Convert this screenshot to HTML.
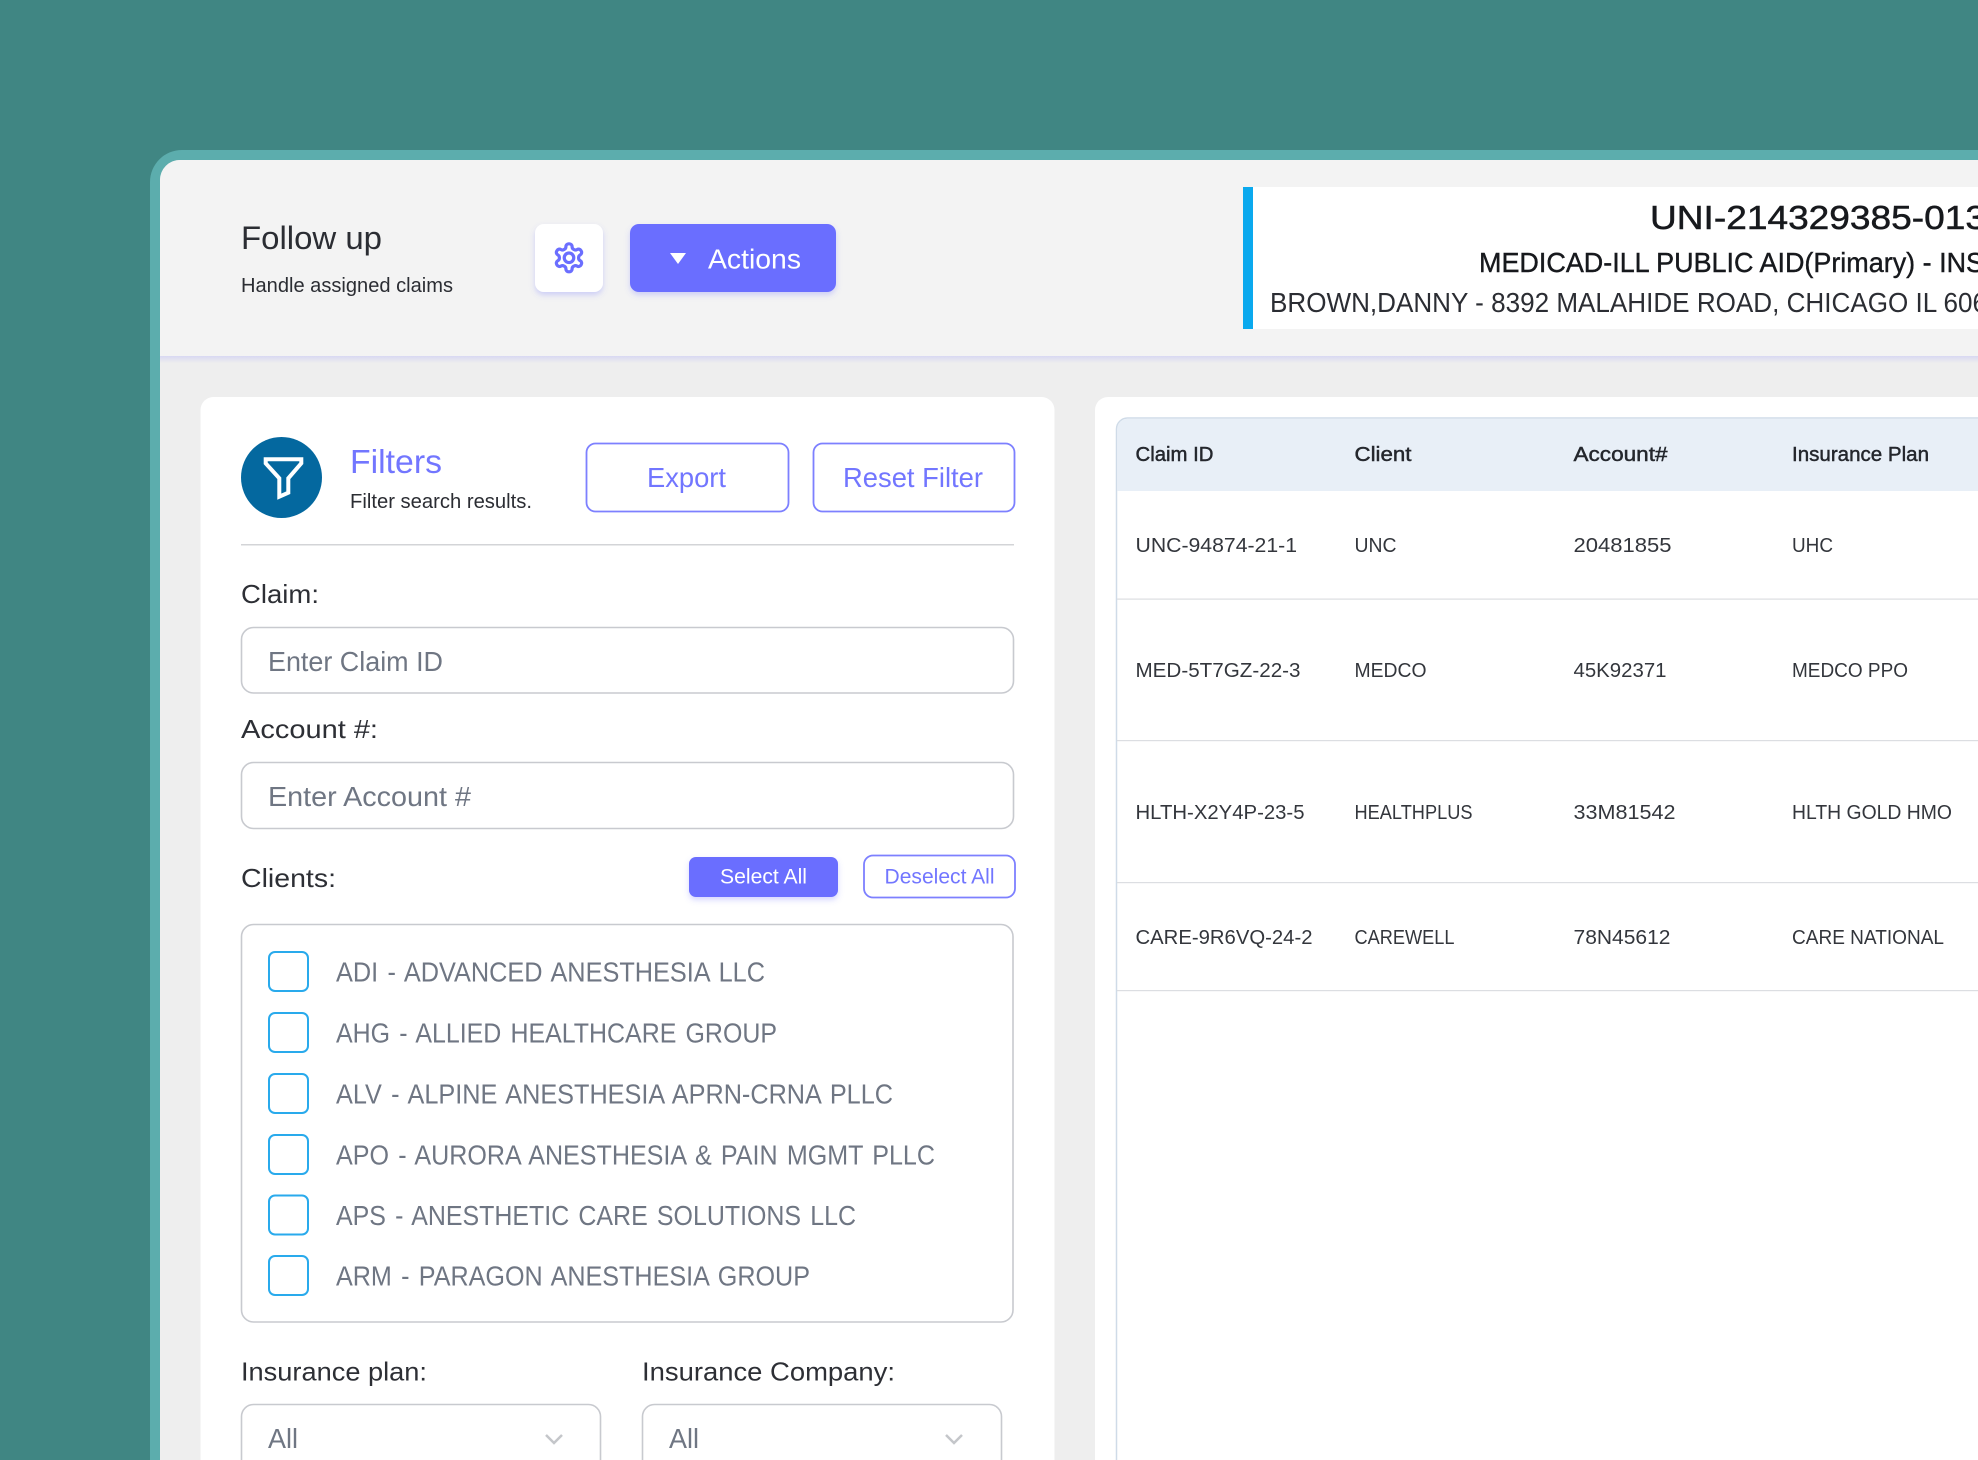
<!DOCTYPE html>
<html lang="en">
<head>
<meta charset="utf-8">
<title>Follow up</title>
<style>
html,body{margin:0;padding:0;width:1978px;height:1460px;overflow:hidden;background:#408683}
svg{display:block;filter:blur(.35px)}
text{font-family:"Liberation Sans",sans-serif;white-space:pre}
.d{fill:#2b2d33}
.g{fill:#6f7683}
.t{fill:#33363c;font-size:20px}
.h{fill:#24272d;font-size:20px;stroke:#24272d;stroke-width:.45px}
.l{fill:#2d2f35;font-size:26px}
.c{fill:#6f7683;font-size:27.5px;word-spacing:2.5px}
.b{fill:#fff;stroke:#29aaec;stroke-width:2px}
.i{fill:#fff;stroke:#c8cacf;stroke-width:1.6px}
.o{fill:#fff;stroke:#7d80ff;stroke-width:1.8px}
.p{fill:#7276ff}
</style>
</head>
<body>
<svg width="1978" height="1460" viewBox="0 0 1978 1460" xmlns="http://www.w3.org/2000/svg">
<defs>
<filter id="s" x="-20%" y="-20%" width="140%" height="150%"><feDropShadow dx="0" dy="3" stdDeviation="3" flood-color="#6b6eff" flood-opacity=".28"/></filter>
<linearGradient id="hl" x1="0" y1="0" x2="0" y2="1"><stop offset="0" stop-color="#d8d8f2"/><stop offset="1" stop-color="#eeeeee"/></linearGradient>
</defs>
<rect width="1978" height="1460" fill="#408683"/>
<path d="M150 1460V182a32 32 0 0 1 32-32H1978V1460Z" fill="#5cadad"/>
<path d="M160 1460V180a20 20 0 0 1 20-20H1978V1460Z" fill="#eeeeee"/>
<path d="M160 356V180a20 20 0 0 1 20-20H1978V356Z" fill="#f3f3f3"/>
<rect x="160" y="356" width="1818" height="7" fill="url(#hl)"/>

<text x="241" y="249" font-size="32" textLength="141" lengthAdjust="spacingAndGlyphs" class="d">Follow up</text>
<text x="241" y="292" font-size="20.5" textLength="212" lengthAdjust="spacingAndGlyphs" class="d">Handle assigned claims</text>

<rect x="535" y="224" width="68" height="68" rx="9" fill="#fff" filter="url(#s)"/>
<g transform="translate(552.200 241) scale(1.4)" fill="none" stroke="#6b6eff" stroke-width="2.300" stroke-linecap="round" stroke-linejoin="round">
<path d="M12.22 2h-.44a2 2 0 0 0-2 2v.18a2 2 0 0 1-1 1.73l-.43.25a2 2 0 0 1-2 0l-.15-.08a2 2 0 0 0-2.73.73l-.22.38a2 2 0 0 0 .73 2.73l.15.1a2 2 0 0 1 1 1.72v.51a2 2 0 0 1-1 1.74l-.15.09a2 2 0 0 0-.73 2.73l.22.38a2 2 0 0 0 2.73.73l.15-.08a2 2 0 0 1 2 0l.43.25a2 2 0 0 1 1 1.73V20a2 2 0 0 0 2 2h.44a2 2 0 0 0 2-2v-.18a2 2 0 0 1 1-1.73l.43-.25a2 2 0 0 1 2 0l.15.08a2 2 0 0 0 2.73-.73l.22-.39a2 2 0 0 0-.73-2.73l-.15-.08a2 2 0 0 1-1-1.74v-.5a2 2 0 0 1 1-1.74l.15-.09a2 2 0 0 0 .73-2.73l-.22-.38a2 2 0 0 0-2.73-.73l-.15.08a2 2 0 0 1-2 0l-.43-.25a2 2 0 0 1-1-1.73V4a2 2 0 0 0-2-2z"/>
<circle cx="12" cy="12" r="3.400"/>
</g>
<rect x="630" y="224" width="206" height="68" rx="9" fill="#6b6eff" filter="url(#s)"/>
<path d="M670 253H686L678 264Z" fill="#fff"/>
<text x="708" y="268.500" font-size="27.5" textLength="93" lengthAdjust="spacingAndGlyphs" fill="#fff">Actions</text>

<rect x="1243" y="187" width="735" height="142" fill="#fff"/>
<rect x="1243" y="187" width="10" height="142" fill="#0aa9ee"/>
<text x="1650" y="229" font-size="33.500" textLength="336" lengthAdjust="spacingAndGlyphs" fill="#17191d" stroke="#17191d" stroke-width=".5">UNI-214329385-013</text>
<text x="1479" y="272" font-size="27.500" textLength="505" lengthAdjust="spacingAndGlyphs" fill="#17191d" stroke="#17191d" stroke-width=".4">MEDICAD-ILL PUBLIC AID(Primary) - INS</text>
<text x="1270" y="312" font-size="27.500" textLength="717" lengthAdjust="spacingAndGlyphs" fill="#2b2d33">BROWN,DANNY - 8392 MALAHIDE ROAD, CHICAGO IL 606</text>

<path d="M200.500 1460V410a13 13 0 0 1 13-13H1041.500a13 13 0 0 1 13 13V1460Z" fill="#fff"/>
<circle cx="281.500" cy="477.500" r="40.500" fill="#04689f"/>
<path d="M265.700 459.300H301.300V463.300L288.300 478.300V492.700L279.300 496.700V478.300L265.700 463.300Z" fill="none" stroke="#fff" stroke-width="4" stroke-linejoin="miter"/>
<text x="350" y="473" font-size="33" textLength="92" lengthAdjust="spacingAndGlyphs" class="p">Filters</text>
<text x="350" y="508" font-size="20.5" textLength="182" lengthAdjust="spacingAndGlyphs" class="d">Filter search results.</text>
<rect x="586.500" y="443.500" width="202" height="68" rx="9" class="o"/>
<text x="647" y="487" font-size="28" textLength="79" lengthAdjust="spacingAndGlyphs" class="p">Export</text>
<rect x="813.500" y="443.500" width="201" height="68" rx="9" class="o"/>
<text x="843" y="487" font-size="28" textLength="140" lengthAdjust="spacingAndGlyphs" class="p">Reset Filter</text>
<rect x="241" y="544" width="773" height="1.500" fill="#d3d4d7"/>

<text x="241" y="603" textLength="78" lengthAdjust="spacingAndGlyphs" class="l">Claim:</text>
<rect x="241.500" y="627.500" width="772" height="65.500" rx="12" class="i"/>
<text x="268" y="671" font-size="27.500" textLength="175" lengthAdjust="spacingAndGlyphs" class="g">Enter Claim ID</text>
<text x="241" y="738" textLength="137" lengthAdjust="spacingAndGlyphs" class="l">Account #:</text>
<rect x="241.500" y="762.500" width="772" height="66" rx="12" class="i"/>
<text x="268" y="806" font-size="27.500" textLength="203" lengthAdjust="spacingAndGlyphs" class="g">Enter Account #</text>

<text x="241" y="887" textLength="95" lengthAdjust="spacingAndGlyphs" class="l">Clients:</text>
<rect x="689" y="857" width="149" height="40" rx="7" fill="#6b6eff" filter="url(#s)"/>
<text x="720" y="883.500" font-size="21" textLength="87" lengthAdjust="spacingAndGlyphs" fill="#fff">Select All</text>
<rect x="864" y="855.500" width="151" height="42" rx="9" class="o"/>
<text x="884.500" y="883.500" font-size="21" textLength="110" lengthAdjust="spacingAndGlyphs" class="p">Deselect All</text>

<rect x="241.500" y="924.500" width="771.500" height="397.500" rx="12" class="i"/>
<rect x="269" y="952" width="39" height="39" rx="6" class="b"/>
<text x="336" y="981.500" textLength="429" lengthAdjust="spacingAndGlyphs" class="c">ADI - ADVANCED ANESTHESIA LLC</text>
<rect x="269" y="1013" width="39" height="39" rx="6" class="b"/>
<text x="336" y="1042.500" textLength="441" lengthAdjust="spacingAndGlyphs" class="c">AHG - ALLIED HEALTHCARE GROUP</text>
<rect x="269" y="1074" width="39" height="39" rx="6" class="b"/>
<text x="336" y="1103.500" textLength="557" lengthAdjust="spacingAndGlyphs" class="c">ALV - ALPINE ANESTHESIA APRN-CRNA PLLC</text>
<rect x="269" y="1135" width="39" height="39" rx="6" class="b"/>
<text x="336" y="1164.500" textLength="599" lengthAdjust="spacingAndGlyphs" class="c">APO - AURORA ANESTHESIA &amp; PAIN MGMT PLLC</text>
<rect x="269" y="1195.500" width="39" height="39" rx="6" class="b"/>
<text x="336" y="1225" textLength="520" lengthAdjust="spacingAndGlyphs" class="c">APS - ANESTHETIC CARE SOLUTIONS LLC</text>
<rect x="269" y="1256" width="39" height="39" rx="6" class="b"/>
<text x="336" y="1285.500" textLength="474" lengthAdjust="spacingAndGlyphs" class="c">ARM - PARAGON ANESTHESIA GROUP</text>

<text x="241" y="1380.500" textLength="186" lengthAdjust="spacingAndGlyphs" class="l">Insurance plan:</text>
<text x="642" y="1380.500" textLength="253" lengthAdjust="spacingAndGlyphs" class="l">Insurance Company:</text>
<path d="M241.500 1460V1416.500a12 12 0 0 1 12-12H588.500a12 12 0 0 1 12 12V1460" class="i"/>
<text x="268" y="1448" font-size="27.500" textLength="30" lengthAdjust="spacingAndGlyphs" class="g">All</text>
<path d="M546 1435L554 1443L562 1435" fill="none" stroke="#c4c6ca" stroke-width="2.500"/>
<path d="M642.500 1460V1416.500a12 12 0 0 1 12-12H989.500a12 12 0 0 1 12 12V1460" class="i"/>
<text x="669" y="1448" font-size="27.500" textLength="30" lengthAdjust="spacingAndGlyphs" class="g">All</text>
<path d="M946 1435L954 1443L962 1435" fill="none" stroke="#c4c6ca" stroke-width="2.500"/>

<path d="M1095 1460V410a13 13 0 0 1 13-13H1978V1460Z" fill="#fff"/>
<path d="M1116.500 1460V429a11 11 0 0 1 11-11H1978" fill="none" stroke="#cfdbe8" stroke-width="1.500"/>
<path d="M1117.300 491V429a10.200 10.200 0 0 1 10.200-10.200H1978V491Z" fill="#e8eff7"/>
<rect x="1117" y="598.500" width="861" height="1.200" fill="#dcdee2"/>
<rect x="1117" y="740" width="861" height="1.200" fill="#dcdee2"/>
<rect x="1117" y="882" width="861" height="1.200" fill="#dcdee2"/>
<rect x="1117" y="990" width="861" height="1.200" fill="#dcdee2"/>

<text x="1135.500" y="461" textLength="78" lengthAdjust="spacingAndGlyphs" class="h">Claim ID</text>
<text x="1354.500" y="461" textLength="57" lengthAdjust="spacingAndGlyphs" class="h">Client</text>
<text x="1573.500" y="461" textLength="94" lengthAdjust="spacingAndGlyphs" class="h">Account#</text>
<text x="1792" y="461" textLength="137" lengthAdjust="spacingAndGlyphs" class="h">Insurance Plan</text>

<text x="1135.500" y="552" textLength="161.500" lengthAdjust="spacingAndGlyphs" class="t">UNC-94874-21-1</text>
<text x="1354.500" y="552" textLength="42" lengthAdjust="spacingAndGlyphs" class="t">UNC</text>
<text x="1573.500" y="552" textLength="98" lengthAdjust="spacingAndGlyphs" class="t">20481855</text>
<text x="1792" y="552" textLength="41" lengthAdjust="spacingAndGlyphs" class="t">UHC</text>

<text x="1135.500" y="677" textLength="165" lengthAdjust="spacingAndGlyphs" class="t">MED-5T7GZ-22-3</text>
<text x="1354.500" y="677" textLength="72" lengthAdjust="spacingAndGlyphs" class="t">MEDCO</text>
<text x="1573.500" y="677" textLength="93" lengthAdjust="spacingAndGlyphs" class="t">45K92371</text>
<text x="1792" y="677" textLength="116" lengthAdjust="spacingAndGlyphs" class="t">MEDCO PPO</text>

<text x="1135.500" y="819" textLength="169" lengthAdjust="spacingAndGlyphs" class="t">HLTH-X2Y4P-23-5</text>
<text x="1354.500" y="819" textLength="118" lengthAdjust="spacingAndGlyphs" class="t">HEALTHPLUS</text>
<text x="1573.500" y="819" textLength="102" lengthAdjust="spacingAndGlyphs" class="t">33M81542</text>
<text x="1792" y="819" textLength="160" lengthAdjust="spacingAndGlyphs" class="t">HLTH GOLD HMO</text>

<text x="1135.500" y="944" textLength="177" lengthAdjust="spacingAndGlyphs" class="t">CARE-9R6VQ-24-2</text>
<text x="1354.500" y="944" textLength="100" lengthAdjust="spacingAndGlyphs" class="t">CAREWELL</text>
<text x="1573.500" y="944" textLength="97" lengthAdjust="spacingAndGlyphs" class="t">78N45612</text>
<text x="1792" y="944" textLength="152" lengthAdjust="spacingAndGlyphs" class="t">CARE NATIONAL</text>
</svg>
</body>
</html>
